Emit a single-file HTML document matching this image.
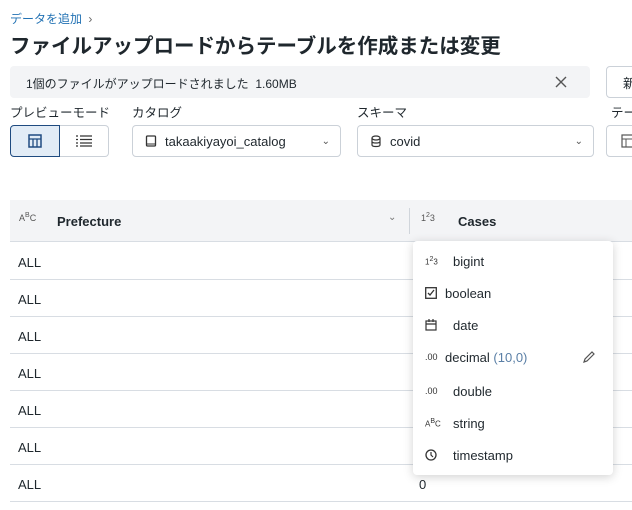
<!DOCTYPE html>
<html><head><meta charset="utf-8"><style>
*{box-sizing:border-box;margin:0;padding:0}
body{width:632px;height:510px;overflow:hidden;background:#fff;font-family:"Liberation Sans","Noto Sans CJK JP",sans-serif;color:#1f272d;position:relative}
.a{position:absolute;white-space:nowrap}
.sel{position:absolute;top:125px;height:32px;border:1px solid #cbd1d8;border-radius:4px;background:#fff;font-size:13px;display:flex;align-items:center}
.lbl{position:absolute;top:102px;font-size:12.5px;color:#1f272d;white-space:nowrap}
.row{position:absolute;left:10px;width:622px;height:37px;border-bottom:1px solid #d8dde3;font-size:13px}
.row span{position:absolute;left:8px;top:12px}
.mi{position:absolute;left:0;width:200px;height:32px;font-size:13px;display:flex;align-items:center}
.ic{position:absolute;left:12px;font-size:8px;color:#333}
sup{font-size:7px}
</style></head><body>
<div class="a" style="left:10px;top:10px;font-size:12px;color:#2272b4">データを追加 <span style="color:#666;margin-left:3px">›</span></div>
<div class="a" style="left:10px;top:29px;font-size:20.5px;font-weight:bold;color:#1f272d">ファイルアップロードからテーブルを作成または変更</div>
<div class="a" style="left:10px;top:66px;width:580px;height:32px;background:#f3f4f6;border-radius:4px;font-size:12px;padding:9px 0 0 16px">1個のファイルがアップロードされました&nbsp; 1.60MB
<svg class="a" style="left:545px;top:10px" width="12" height="12"><path d="M1 1L11 11M11 1L1 11" stroke="#555" stroke-width="1.4"/></svg></div>
<div class="a" style="left:606px;top:66px;width:40px;height:32px;border:1px solid #cbd1d8;border-radius:4px;font-size:13px;padding:6px 0 0 16px">新</div>
<div class="lbl" style="left:10px">プレビューモード</div>
<div class="lbl" style="left:132px">カタログ</div>
<div class="lbl" style="left:357px">スキーマ</div>
<div class="lbl" style="left:611px">テー</div>
<div class="a" style="left:10px;top:125px;width:50px;height:32px;background:#e2ecf6;border:1px solid #1f4b80;border-radius:4px 0 0 4px"><svg class="a" style="left:17px;top:8px" width="14" height="14"><rect x="1" y="1" width="12" height="12" fill="none" stroke="#1f4b80" stroke-width="1.5"/><path d="M1 5H13M5 5V13M9 5V13" stroke="#1f4b80" stroke-width="1.3"/></svg></div>
<div class="a" style="left:60px;top:125px;width:49px;height:32px;border:1px solid #cbd1d8;border-left:none;border-radius:0 4px 4px 0"><svg class="a" style="left:16px;top:9px" width="16" height="12"><path d="M0 1H2M4 1H16M0 4.5H2M4 4.5H16M0 8H2M4 8H16M0 11H2M4 11H16" stroke="#333" stroke-width="1.2"/></svg></div>
<div class="sel" style="left:132px;width:209px;padding-left:12px"><svg width="12" height="13" style="margin-right:8px"><rect x="1.5" y="1" width="9" height="10" rx="1" fill="none" stroke="#333" stroke-width="1.3"/><path d="M1.5 9H10.5" stroke="#333"/></svg>takaakiyayoi_catalog<span style="position:absolute;right:10px;font-size:10px;color:#555">⌄</span></div>
<div class="sel" style="left:357px;width:237px;padding-left:12px"><svg width="12" height="13" style="margin-right:8px"><ellipse cx="6" cy="3" rx="4" ry="2" fill="none" stroke="#333" stroke-width="1.2"/><path d="M2 3V10C2 12 10 12 10 10V3M2 6.5C2 8.5 10 8.5 10 6.5" fill="none" stroke="#333" stroke-width="1.2"/></svg>covid<span style="position:absolute;right:10px;font-size:10px;color:#555">⌄</span></div>
<div class="sel" style="left:606px;width:40px;padding-left:14px"><svg width="12" height="14"><rect x="1" y="1" width="12" height="12" fill="none" stroke="#555" stroke-width="1.2"/><path d="M1 5H13M5 5V13" stroke="#555"/></svg></div>
<div class="a" style="left:10px;top:200px;width:622px;height:42px;background:#f3f4f6;border-bottom:1px solid #d8dde3"></div>
<div class="a" style="left:19px;top:212px;font-size:9px;color:#555">A<sup>B</sup>C</div>
<div class="a" style="left:57px;top:214px;font-size:13px;font-weight:bold">Prefecture</div>
<div class="a" style="left:388px;top:212px;font-size:10px;color:#777">⌄</div>
<div class="a" style="left:409px;top:208px;width:1px;height:26px;background:#d0d5db"></div>
<div class="a" style="left:421px;top:212px;font-size:9px;color:#555">1<sup>2</sup>3</div>
<div class="a" style="left:458px;top:214px;font-size:13px;font-weight:bold">Cases</div>
<div class="row" style="top:243px"><span>ALL</span></div>
<div class="row" style="top:280px"><span>ALL</span></div>
<div class="row" style="top:317px"><span>ALL</span></div>
<div class="row" style="top:354px"><span>ALL</span></div>
<div class="row" style="top:391px"><span>ALL</span></div>
<div class="row" style="top:428px"><span>ALL</span></div>
<div class="row" style="top:465px"><span>ALL</span><span style="left:409px">0</span></div>
<div class="a" style="left:413px;top:241px;width:200px;height:234px;background:#fff;border-radius:4px;box-shadow:0 2px 10px rgba(0,0,0,.18)">
<div class="mi" style="top:4px"><span class="ic">1<sup>2</sup>3</span><span style="margin-left:40px">bigint</span></div>
<div class="mi" style="top:36px"><svg class="a" style="left:12px;top:10px" width="12" height="12"><rect x="0.7" y="0.7" width="10.6" height="10.6" fill="none" stroke="#333" stroke-width="1.3"/><path d="M3 6L5 8L9 3" fill="none" stroke="#333" stroke-width="1.3"/></svg><span style="margin-left:32px">boolean</span></div>
<div class="mi" style="top:68px"><svg class="a" style="left:12px;top:10px" width="12" height="12"><rect x="1" y="2" width="10" height="9" fill="none" stroke="#333" stroke-width="1.2"/><path d="M1 5H11M4 0V3M8 0V3" stroke="#333" stroke-width="1.2"/></svg><span style="margin-left:40px">date</span></div>
<div class="mi" style="top:100px"><span class="ic" style="font-size:9px">.00</span><span style="margin-left:32px">decimal <span style="color:#5a7fa6">(10,0)</span></span><svg class="a" style="left:169px;top:9px" width="14" height="14"><path d="M2 12L3 9L10 2L12 4L5 11Z" fill="none" stroke="#555" stroke-width="1.2"/></svg></div>
<div class="mi" style="top:134px"><span class="ic" style="font-size:9px">.00</span><span style="margin-left:40px">double</span></div>
<div class="mi" style="top:166px"><span class="ic">A<sup>B</sup>C</span><span style="margin-left:40px">string</span></div>
<div class="mi" style="top:198px"><svg class="a" style="left:12px;top:10px" width="12" height="12"><circle cx="6" cy="6" r="5" fill="none" stroke="#333" stroke-width="1.3"/><path d="M6 3V6L8 8" fill="none" stroke="#333" stroke-width="1.2"/></svg><span style="margin-left:40px">timestamp</span></div>
</div>
</body></html>
